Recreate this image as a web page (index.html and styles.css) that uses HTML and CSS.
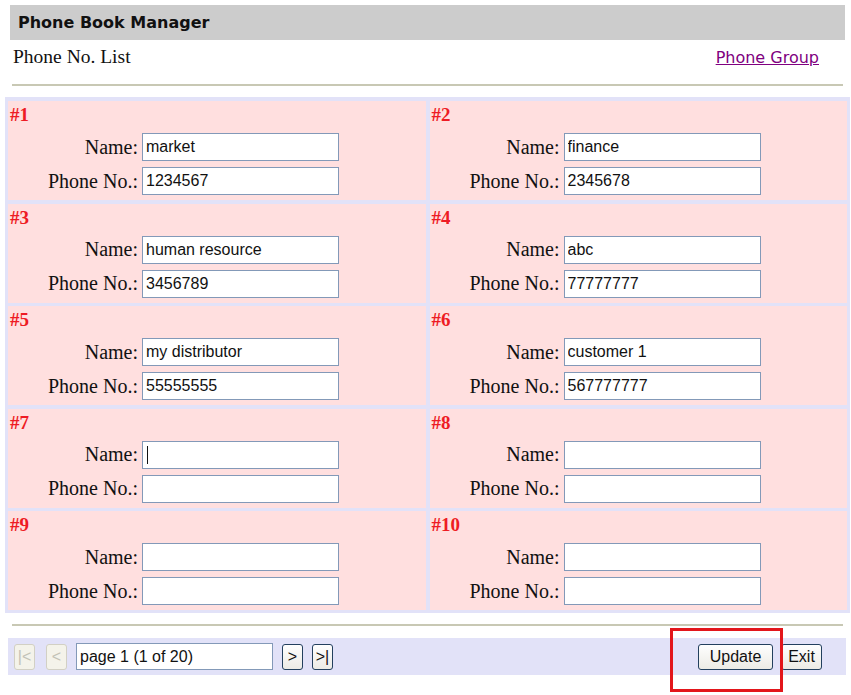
FILE: index.html
```html
<!DOCTYPE html>
<html lang="en">
<head>
    <meta charset="UTF-8">
    <title>Phone Book Manager</title>
    <link rel="stylesheet" href="styles.css">
</head>
<body>
    <div class="titlebar">Phone Book Manager</div>

    <div class="subbar">
        <span class="subtitle">Phone No. List</span>
        <a class="group-link" href="#">Phone Group</a>
    </div>
    <div class="rule"></div>

    <div class="book">
        <div class="entry">
            <div class="num">#1</div>
            <div class="fields">
                <label>Name:</label><input type="text" value="market">
                <label>Phone No.:</label><input type="text" value="1234567">
            </div>
        </div>
        <div class="entry">
            <div class="num">#2</div>
            <div class="fields">
                <label>Name:</label><input type="text" value="finance">
                <label>Phone No.:</label><input type="text" value="2345678">
            </div>
        </div>
        <div class="entry">
            <div class="num">#3</div>
            <div class="fields">
                <label>Name:</label><input type="text" value="human resource">
                <label>Phone No.:</label><input type="text" value="3456789">
            </div>
        </div>
        <div class="entry">
            <div class="num">#4</div>
            <div class="fields">
                <label>Name:</label><input type="text" value="abc">
                <label>Phone No.:</label><input type="text" value="77777777">
            </div>
        </div>
        <div class="entry">
            <div class="num">#5</div>
            <div class="fields">
                <label>Name:</label><input type="text" value="my distributor">
                <label>Phone No.:</label><input type="text" value="55555555">
            </div>
        </div>
        <div class="entry">
            <div class="num">#6</div>
            <div class="fields">
                <label>Name:</label><input type="text" value="customer 1">
                <label>Phone No.:</label><input type="text" value="567777777">
            </div>
        </div>
        <div class="entry">
            <div class="num">#7</div>
            <div class="fields">
                <label>Name:</label><input type="text" class="caret" value="">
                <label>Phone No.:</label><input type="text" value="">
            </div>
        </div>
        <div class="entry">
            <div class="num">#8</div>
            <div class="fields">
                <label>Name:</label><input type="text" value="">
                <label>Phone No.:</label><input type="text" value="">
            </div>
        </div>
        <div class="entry">
            <div class="num">#9</div>
            <div class="fields">
                <label>Name:</label><input type="text" value="">
                <label>Phone No.:</label><input type="text" value="">
            </div>
        </div>
        <div class="entry">
            <div class="num">#10</div>
            <div class="fields">
                <label>Name:</label><input type="text" value="">
                <label>Phone No.:</label><input type="text" value="">
            </div>
        </div>
    </div>

    <div class="rule bottom"></div>

    <div class="pager">
        <div class="nav">
            <button class="btn small first" disabled>|&lt;</button>
            <button class="btn small" disabled>&lt;</button>
            <input type="text" class="page-box" value="page 1 (1 of 20)">
            <button class="btn small">&gt;</button>
            <button class="btn small">&gt;|</button>
        </div>
        <div class="actions">
            <button class="btn update">Update</button>
            <button class="btn exit">Exit</button>
        </div>
        <div class="mark"></div>
    </div>
</body>
</html>
```

FILE: styles.css
```css
body {
    margin: 0;
    padding-bottom: 20px;
    background-color: #fff;
    font-family: "Liberation Serif", "Times New Roman", serif;
    color: #111;
}
.titlebar {
    margin: 5px 6px 0 10px;
    height: 35px;
    padding-left: 8px;
    display: flex;
    align-items: center;
    background-color: #cccccc;
    font-family: "DejaVu Sans", Verdana, sans-serif;
    font-weight: bold;
    font-size: 16px;
    color: #111;
}
.subbar {
    margin: 0 32px 0 13px;
    height: 34px;
    display: flex;
    justify-content: space-between;
    align-items: center;
}
.subtitle {
    font-size: 19.5px;
}
.group-link {
    font-family: "DejaVu Sans", Verdana, sans-serif;
    font-size: 16px;
    color: #800080;
}
.rule {
    margin: 10px 8px 0 12px;
    height: 2px;
    background-color: #c8c8b4;
}
.rule.bottom {
    margin: 11px 8px 0 12px;
}
.book {
    margin: 11px 1px 0 5px;
    padding: 4px 3px 3px 3px;
    background-color: #e2e2f8;
    display: grid;
    grid-template-columns: 1fr 1fr;
    grid-auto-rows: 99px;
    gap: 3.5px 4px;
}
.entry {
    background-color: #ffdfdf;
    padding: 3px 0 0 0;
}
.num {
    height: 22px;
    padding-left: 2px;
    color: #ee1b24;
    font-weight: bold;
    font-size: 19px;
    line-height: 22px;
}
.fields {
    margin-top: 7px;
    display: grid;
    grid-template-columns: 130px 197px;
    column-gap: 4px;
    row-gap: 6px;
    align-items: center;
}
.fields label {
    text-align: right;
    font-size: 20px;
}
input[type=text] {
    height: 28px;
    padding: 0 3px;
    box-sizing: border-box;
    border: 1px solid #8399b8;
    background-color: #fff;
    font-family: "Liberation Sans", Arial, sans-serif;
    font-size: 16px;
    color: #111;
    outline: none;
}
input.caret {
    background-image: linear-gradient(#111, #111);
    background-size: 1px 18px;
    background-position: 4px 4px;
    background-repeat: no-repeat;
}
.pager {
    position: relative;
    margin: 12px 5px 0 8px;
    height: 37px;
    padding: 0 24px 0 6px;
    background-color: #e2e2f8;
    display: flex;
    justify-content: space-between;
    align-items: center;
}
.nav, .actions {
    display: flex;
    align-items: center;
}
.nav {
    gap: 9px;
}
.nav .first {
    margin-right: 2px;
}
.actions {
    gap: 8px;
}
.btn {
    height: 26px;
    padding: 0;
    border: 1px solid #23405e;
    border-radius: 3px;
    background: linear-gradient(#fefefe, #ecebe5);
    font-family: "Liberation Sans", Arial, sans-serif;
    font-size: 16px;
    color: #111;
    cursor: pointer;
}
.btn.small {
    width: 21px;
}
.btn:disabled {
    border-color: #d2d0c4;
    background: #f4f3ea;
    color: #c2c2b6;
    cursor: default;
}
.btn.update {
    width: 75px;
}
.btn.exit {
    width: 41px;
}
.page-box {
    width: 197px;
    height: 27px !important;
}
.mark {
    position: absolute;
    left: 662px;
    top: -10px;
    width: 113px;
    height: 64px;
    box-sizing: border-box;
    border: 3px solid #e3161b;
}
```
